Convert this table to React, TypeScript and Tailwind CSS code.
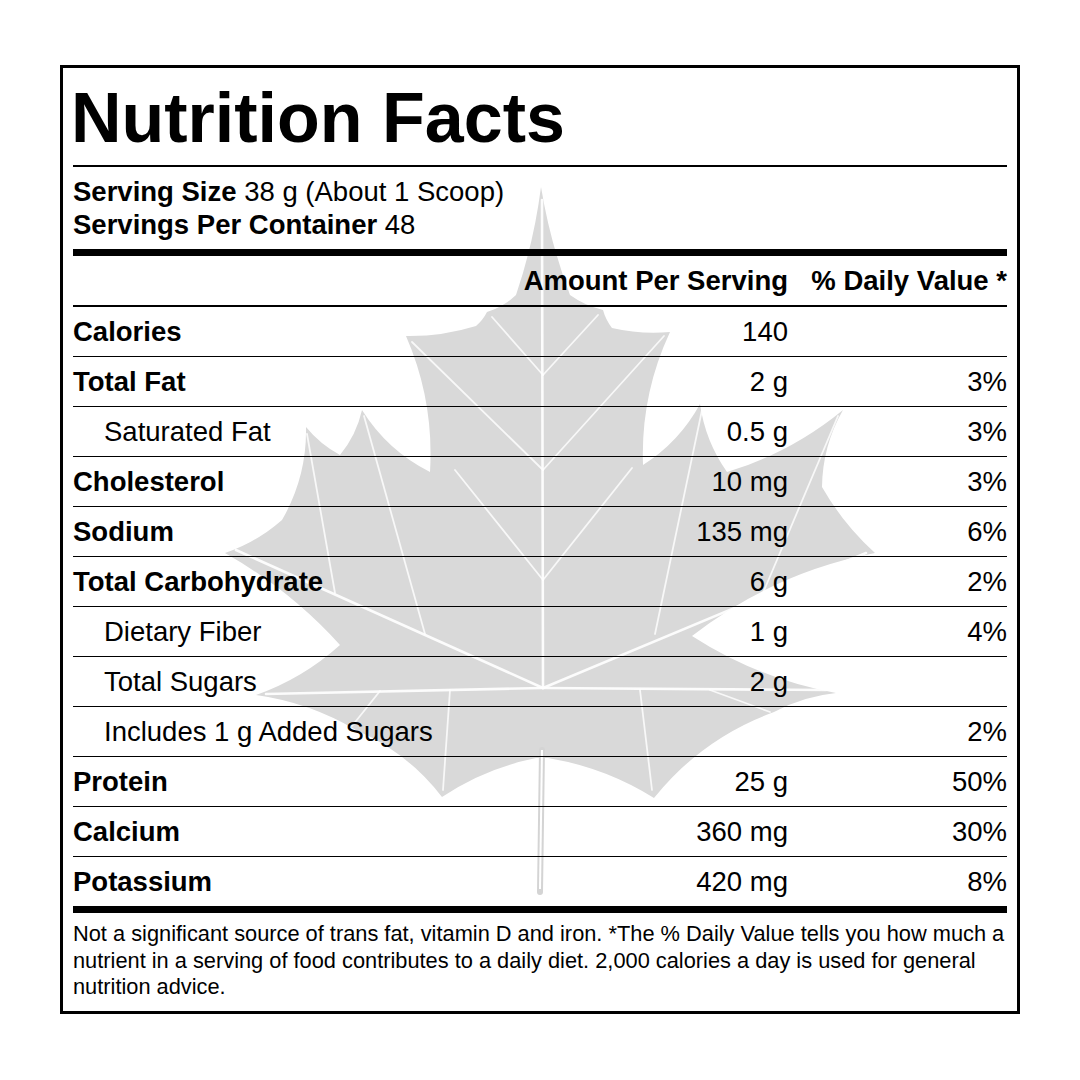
import React from 'react';

type Nutrient = {
  label: string;
  amount?: string;
  dv?: string;
  sub?: boolean;
};

const NUTRIENTS: Nutrient[] = [
  { label: 'Calories', amount: '140' },
  { label: 'Total Fat', amount: '2 g', dv: '3%' },
  { label: 'Saturated Fat', amount: '0.5 g', dv: '3%', sub: true },
  { label: 'Cholesterol', amount: '10 mg', dv: '3%' },
  { label: 'Sodium', amount: '135 mg', dv: '6%' },
  { label: 'Total Carbohydrate', amount: '6 g', dv: '2%' },
  { label: 'Dietary Fiber', amount: '1 g', dv: '4%', sub: true },
  { label: 'Total Sugars', amount: '2 g', sub: true },
  { label: 'Includes 1 g Added Sugars', dv: '2%', sub: true },
  { label: 'Protein', amount: '25 g', dv: '50%' },
  { label: 'Calcium', amount: '360 mg', dv: '30%' },
  { label: 'Potassium', amount: '420 mg', dv: '8%' },
];

// leaf outline, clockwise from the top tip: [x, y, bulge of the edge that starts here]
const LEAF: [number, number, number][] = [
  [541, 187, 0.05],
  [570, 295, 0.1],
  [603, 310, 0.1],
  [612, 328, 0.08],
  [670, 332, 0.12],
  [643, 465, 0.13],
  [700, 404, 0.12],
  [727, 472, 0.1],
  [843, 410, 0.13],
  [822, 487, 0.08],
  [875, 553, 0.12],
  [692, 636, 0.1],
  [836, 693, 0.1],
  [774, 712, 0.14],
  [654, 798, 0.1],
  [548, 758, 0],
  [536, 758, 0.1],
  [442, 797, 0.13],
  [356, 730, 0.1],
  [256, 695, 0.1],
  [340, 645, 0.08],
  [225, 553, 0.1],
  [282, 520, 0.14],
  [306, 427, 0.1],
  [340, 455, 0.12],
  [362, 410, 0.14],
  [430, 472, 0.12],
  [406, 336, 0.08],
  [476, 326, 0.1],
  [487, 312, 0.12],
  [516, 295, 0.05],
];

const leafPath = () => {
  let d = `M${LEAF[0][0]},${LEAF[0][1]}`;
  for (let i = 0; i < LEAF.length; i++) {
    const [ax, ay, bulge] = LEAF[i];
    const [bx, by] = LEAF[(i + 1) % LEAF.length];
    const dx = bx - ax;
    const dy = by - ay;
    const len = Math.hypot(dx, dy);
    const cx = (ax + bx) / 2 + (-dy / len) * bulge * len;
    const cy = (ay + by) / 2 + (dx / len) * bulge * len;
    d += ` Q${cx.toFixed(1)},${cy.toFixed(1)} ${bx},${by}`;
  }
  return d + ' Z';
};

const MAIN_VEINS = [
  'M543,688 L542,200',
  'M543,688 L236,550',
  'M543,688 L866,553',
  'M543,688 L266,694',
  'M543,688 L826,690',
];

const SIDE_VEINS = [
  'M543,470 L412,342',
  'M543,470 L664,336',
  'M543,375 L492,317',
  'M543,375 L598,315',
  'M543,580 L455,470',
  'M543,580 L632,468',
  'M425,634 L364,416',
  'M335,593 L307,434',
  'M655,634 L702,410',
  'M760,600 L838,416',
  'M450,690 L443,790',
  'M640,690 L652,790',
  'M380,691 L352,726',
  'M710,690 L770,712',
];

const MapleLeaf: React.FC = () => (
  <svg
    className="absolute left-0 top-0 w-[954px] h-[943px] pointer-events-none"
    viewBox="63 68 954 943"
  >
    <defs>
      <filter id="soft" x="-5%" y="-5%" width="110%" height="110%">
        <feGaussianBlur stdDeviation="0.7" />
      </filter>
    </defs>
    <g filter="url(#soft)">
      <path d={leafPath()} fill="#d9d9d9" />
      <line x1="542" y1="750" x2="540" y2="892" stroke="#d4d4d4" strokeWidth="6" strokeLinecap="round" />
      <line x1="542" y1="750" x2="540" y2="889" stroke="#ffffff" strokeWidth="2" />
      {MAIN_VEINS.map((d) => (
        <path key={d} d={d} stroke="#ffffff" strokeWidth="2.6" fill="none" strokeLinecap="round" opacity="0.9" />
      ))}
      {SIDE_VEINS.map((d) => (
        <path key={d} d={d} stroke="#ffffff" strokeWidth="1.8" fill="none" strokeLinecap="round" opacity="0.8" />
      ))}
    </g>
  </svg>
);

const App: React.FC = () => {
  return (
    <div className="min-h-screen bg-white pt-[65px] pl-[60px] font-['Liberation_Sans',Arial,sans-serif] text-black">
      <div className="relative w-[960px] border-[3px] border-black bg-white">
        <MapleLeaf />

        <div className="relative pl-[10px] pr-[10px]">
          {/* Title */}
          <h1 className="-ml-[2px] pt-[15px] pb-[12px] text-[70px] font-bold leading-[70px]">
            Nutrition Facts
          </h1>
          <div className="h-[2px] bg-black" />

          {/* Serving info */}
          <div className="pt-[8px] pb-[8px] text-[27.5px] leading-[33px]">
            <div>
              <span className="font-bold">Serving Size</span> 38 g (About 1 Scoop)
            </div>
            <div>
              <span className="font-bold">Servings Per Container</span> 48
            </div>
          </div>
          <div className="h-[7px] bg-black" />

          {/* Column headers */}
          <div className="flex h-[49px] items-center text-[27.5px] font-bold">
            <div className="flex-1" />
            <div className="text-right">Amount Per Serving</div>
            <div className="w-[219px] text-right">% Daily Value *</div>
          </div>
          <div className="h-[2px] bg-black" />

          {/* Nutrient rows */}
          {NUTRIENTS.map((n, i) => (
            <div
              key={n.label}
              className={`flex items-center text-[27.5px] ${
                i < NUTRIENTS.length - 1 ? 'h-[50px] border-b border-black' : 'h-[49px]'
              }`}
            >
              <div className={`flex-1 ${n.sub ? 'pl-[31px]' : 'font-bold'}`}>{n.label}</div>
              <div className="text-right">{n.amount}</div>
              <div className="w-[219px] text-right">{n.dv}</div>
            </div>
          ))}
          <div className="h-[7px] bg-black" />

          {/* Footnote */}
          <p className="pt-[8px] pb-[10.5px] text-[21.8px] leading-[26.5px]">
            Not a significant source of trans fat, vitamin D and iron. *The % Daily Value tells you
            how much a nutrient in a serving of food contributes to a daily diet. 2,000 calories a
            day is used for general nutrition advice.
          </p>
        </div>
      </div>
    </div>
  );
};

export default App;
